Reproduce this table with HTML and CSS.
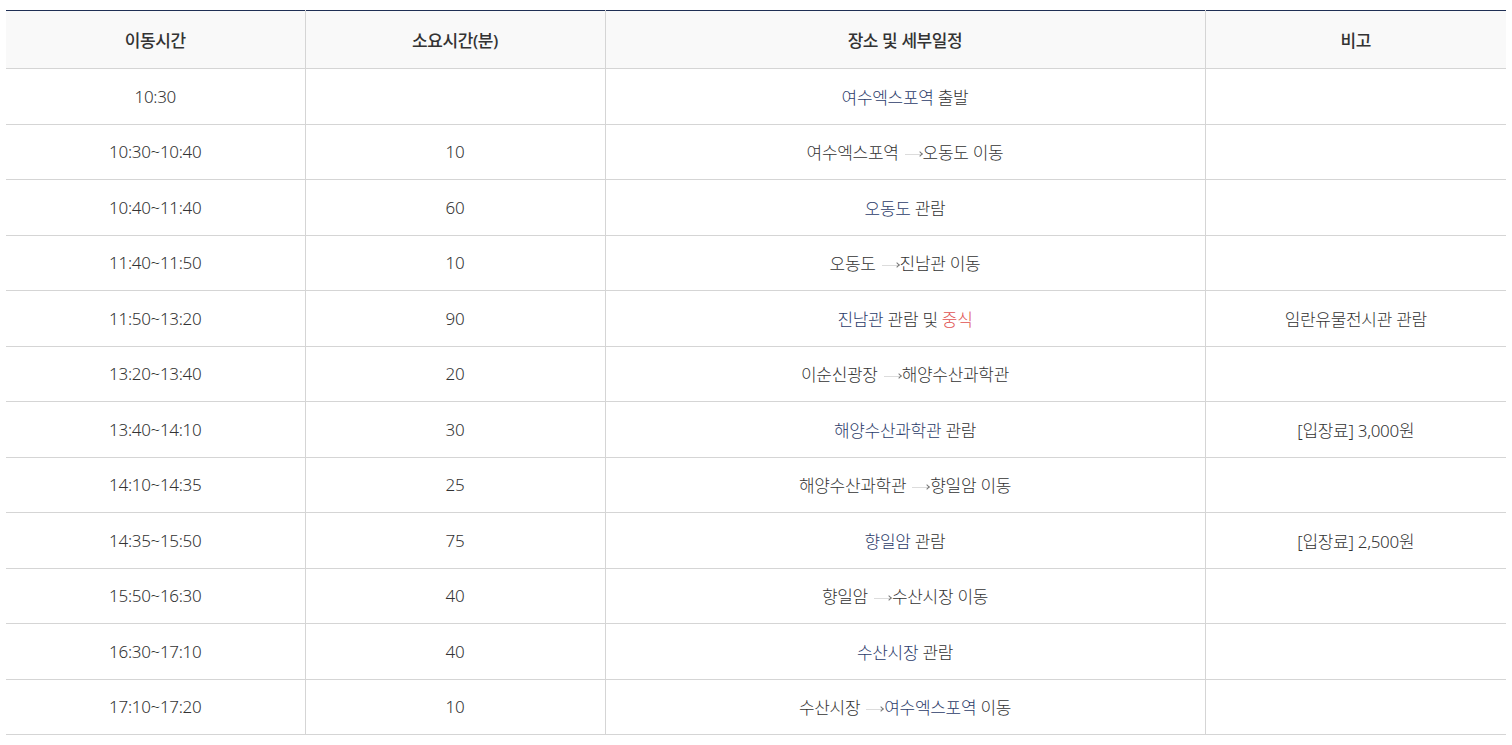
FILE: index.html
```html
<!DOCTYPE html>
<html lang="ko">
<head>
<meta charset="utf-8">
<link rel="stylesheet" href="styles.css">
</head>
<body>
<div class="wrap">
<table class="sched">
  <colgroup><col class="c1"><col class="c2"><col class="c3"><col class="c4"></colgroup>
  <thead>
    <tr><th>이동시간</th><th>소요시간(분)</th><th>장소 및 세부일정</th><th>비고</th></tr>
  </thead>
  <tbody>
    <tr><td>10:30</td><td></td><td><span class="pl">여수엑스포역</span> 출발</td><td></td></tr>
    <tr><td>10:30~10:40</td><td>10</td><td>여수엑스포역<span class="ar"></span>오동도 이동</td><td></td></tr>
    <tr><td>10:40~11:40</td><td>60</td><td><span class="pl">오동도</span> 관람</td><td></td></tr>
    <tr><td>11:40~11:50</td><td>10</td><td>오동도<span class="ar"></span>진남관 이동</td><td></td></tr>
    <tr><td>11:50~13:20</td><td>90</td><td><span class="pl">진남관</span> 관람 및 <span class="red">중식</span></td><td>임란유물전시관 관람</td></tr>
    <tr><td>13:20~13:40</td><td>20</td><td>이순신광장<span class="ar"></span>해양수산과학관</td><td></td></tr>
    <tr><td>13:40~14:10</td><td>30</td><td><span class="pl">해양수산과학관</span> 관람</td><td>[입장료] 3,000원</td></tr>
    <tr><td>14:10~14:35</td><td>25</td><td>해양수산과학관<span class="ar"></span>향일암 이동</td><td></td></tr>
    <tr><td>14:35~15:50</td><td>75</td><td><span class="pl">향일암</span> 관람</td><td>[입장료] 2,500원</td></tr>
    <tr><td>15:50~16:30</td><td>40</td><td>향일암<span class="ar"></span>수산시장 이동</td><td></td></tr>
    <tr><td>16:30~17:10</td><td>40</td><td><span class="pl">수산시장</span> 관람</td><td></td></tr>
    <tr><td>17:10~17:20</td><td>10</td><td>수산시장<span class="ar"></span><span class="pl">여수엑스포역</span> 이동</td><td></td></tr>
  </tbody>
</table>
</div>
</body>
</html>
```
FILE: styles.css
```css
html, body { margin: 0; padding: 0; background: #fff; }
.wrap { padding: 10px 6px 0 6px; }
.sched {
  width: 1500px;
  border-collapse: collapse;
  table-layout: fixed;
  font-family: "Noto Sans", "Noto Sans CJK KR", sans-serif;
  font-size: 17px;
  color: #333;
  border-top: 1px solid #1f2f55;
}
.c1 { width: 299px; }
.c2 { width: 300px; }
.c3 { width: 600px; }
.c4 { width: 301px; }
.sched th {
  height: 57px;
  padding: 0;
  background: #f9f9f9;
  font-weight: 500;
  color: #333;
  border-bottom: 1px solid #d5d5d5;
  border-left: 1px solid #d5d5d5;
  text-align: center;
  vertical-align: middle;
  letter-spacing: -0.4px;
}
.sched td {
  height: 54.5px;
  padding: 0;
  text-align: center;
  vertical-align: middle;
  border-bottom: 1px solid #d5d5d5;
  border-left: 1px solid #d5d5d5;
  font-weight: 300;
  letter-spacing: -0.3px;
}
.sched th:first-child, .sched td:first-child { border-left: none; }
.pl { color: #2c3c6a; }
.red { color: #e05252; }
.ar {
  display: inline-block;
  position: relative;
  width: 16px;
  height: 1px;
  background: #dcdcdc;
  vertical-align: middle;
  margin: 0 2px 0 6px;
}
.ar::after {
  content: "";
  position: absolute;
  right: -1px;
  top: -2px;
  width: 3px;
  height: 3px;
  border-top: 1px solid #777;
  border-right: 1px solid #777;
  transform: rotate(45deg);
}
```
